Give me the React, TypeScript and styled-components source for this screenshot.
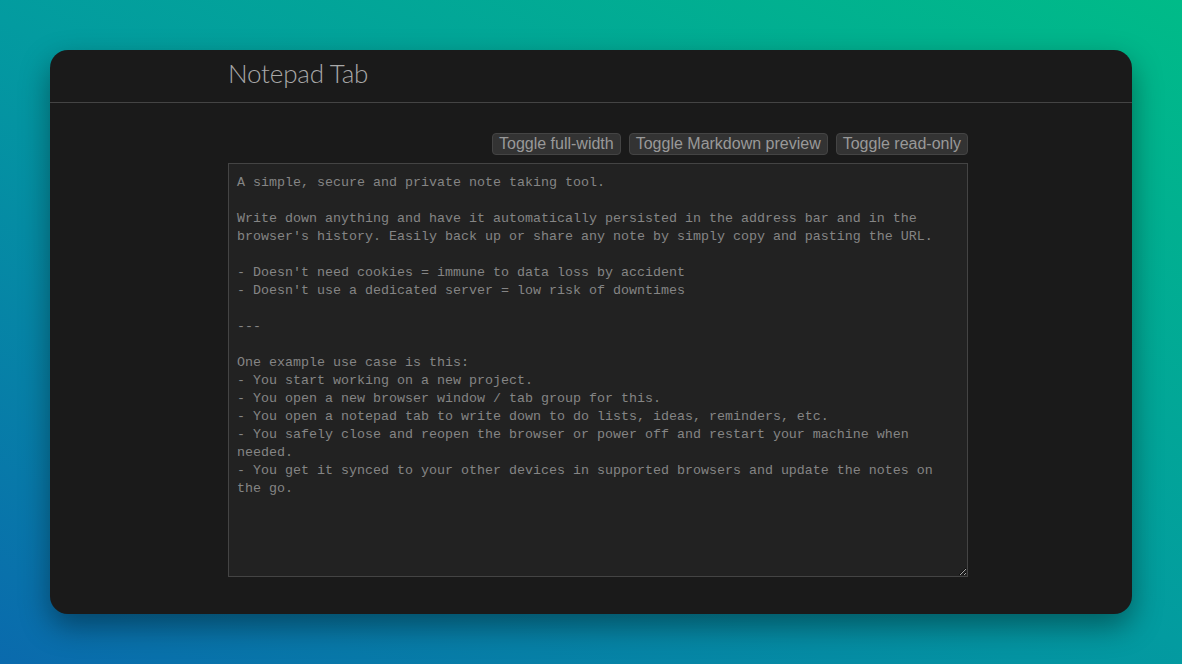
import React from "react";
import styled, { createGlobalStyle } from "styled-components";

const noteText = `A simple, secure and private note taking tool.

Write down anything and have it automatically persisted in the address bar and in the browser's history. Easily back up or share any note by simply copy and pasting the URL.

- Doesn't need cookies = immune to data loss by accident
- Doesn't use a dedicated server = low risk of downtimes

---

One example use case is this:
- You start working on a new project.
- You open a new browser window / tab group for this.
- You open a notepad tab to write down to do lists, ideas, reminders, etc.
- You safely close and reopen the browser or power off and restart your machine when needed.
- You get it synced to your other devices in supported browsers and update the notes on the go.`;

// ページ全体のスタイル
const GlobalStyle = createGlobalStyle`
  html, body {
    margin: 0;
    padding: 0;
  }
  body {
    font-family: "Liberation Sans", Arial, sans-serif;
  }
`;

const SPage = styled.div`
  box-sizing: border-box;
  width: 100%;
  height: 664px;
  padding: 50px;
  background: linear-gradient(28deg, #0a6aad 0%, #039ba0 50%, #00bb88 100%);
`;

const SWindow = styled.div`
  height: 564px;
  background-color: #1a1a1a;
  border-radius: 18px;
  box-shadow: 0 12px 30px rgba(0, 0, 0, 0.4);
  display: flex;
  flex-direction: column;
  overflow: hidden;
`;

const SHeader = styled.header`
  box-sizing: border-box;
  height: 53px;
  padding: 0 0 6px 178px;
  border-bottom: 1px solid #444;
  display: flex;
  align-items: center;
`;

const STitle = styled.h1`
  margin: 0;
  font-family: Lato, "Open Sans", sans-serif;
  font-weight: 300;
  font-size: 26px;
  color: #a8a8a8;
  letter-spacing: -0.2px;
`;

const SMain = styled.main`
  width: 740px;
  margin-left: 178px;
  padding-top: 30px;
  display: flex;
  flex-direction: column;
  gap: 8px;
`;

const SToolbar = styled.div`
  display: flex;
  justify-content: flex-end;
  gap: 8px;
`;

const SButton = styled.button`
  height: 22px;
  padding: 0 6px;
  background-color: #333;
  color: #999;
  border: 1px solid #444;
  border-radius: 4px;
  font-family: "Liberation Sans", Arial, sans-serif;
  font-size: 16px;
  line-height: 20px;
  cursor: pointer;
`;

const SNote = styled.textarea`
  box-sizing: border-box;
  width: 740px;
  height: 414px;
  margin: 0;
  padding: 10px 8px 8px;
  background-color: #222;
  color: #858585;
  border: 1px solid #444;
  border-radius: 0;
  font-family: "Liberation Mono", "Courier New", monospace;
  font-size: 13.33px;
  line-height: 18px;
  outline: none;
  resize: both;
`;

export default function App() {
  return (
    <>
      <GlobalStyle />
      <SPage>
        <SWindow>
          <SHeader>
            <STitle>Notepad Tab</STitle>
          </SHeader>
          <SMain>
            <SToolbar>
              <SButton>Toggle full-width</SButton>
              <SButton>Toggle Markdown preview</SButton>
              <SButton>Toggle read-only</SButton>
            </SToolbar>
            <SNote defaultValue={noteText} spellCheck={false} />
          </SMain>
        </SWindow>
      </SPage>
    </>
  );
}
